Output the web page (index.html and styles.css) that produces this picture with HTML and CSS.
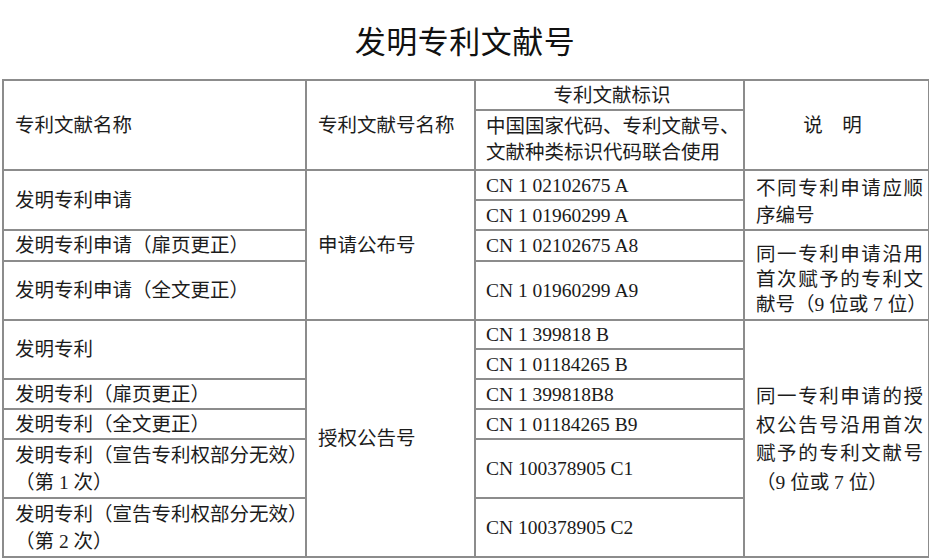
FILE: index.html
```html
<!DOCTYPE html>
<html lang="zh-CN">
<head>
<meta charset="utf-8">
<title>发明专利文献号</title>
<link rel="stylesheet" href="styles.css">
</head>
<body>
<div class="page">
  <h1 class="title">发明专利文献号</h1>
  <table class="grid">
    <colgroup>
      <col class="c1">
      <col class="c2">
      <col class="c3">
      <col class="c4">
    </colgroup>
    <tbody>
      <tr class="h30">
        <td rowspan="2">专利文献名称</td>
        <td rowspan="2">专利文献号名称</td>
        <td class="center">专利文献标识</td>
        <td rowspan="2" class="center hdr-note">说　明</td>
      </tr>
      <tr class="h60">
        <td class="lh26 nowrap">中国国家代码、专利文献号、<br>文献种类标识代码联合使用</td>
      </tr>
      <tr class="h30">
        <td rowspan="2">发明专利申请</td>
        <td rowspan="4">申请公布号</td>
        <td class="num">CN 1 02102675 A</td>
        <td rowspan="2" class="note note-a">
          <span class="jl">不同专利申请应顺</span>
          <span class="ll">序编号</span>
        </td>
      </tr>
      <tr class="h30">
        <td class="num">CN 1 01960299 A</td>
      </tr>
      <tr class="h31">
        <td>发明专利申请（扉页更正）</td>
        <td class="num">CN 1 02102675 A8</td>
        <td rowspan="2" class="note note-b">
          <span class="jl">同一专利申请沿用</span>
          <span class="jl">首次赋予的专利文</span>
          <span class="ll">献号（9 位或 7 位）</span>
        </td>
      </tr>
      <tr class="h59">
        <td>发明专利申请（全文更正）</td>
        <td class="num">CN 1 01960299 A9</td>
      </tr>
      <tr class="h29">
        <td rowspan="2">发明专利</td>
        <td rowspan="6">授权公告号</td>
        <td class="num">CN 1 399818 B</td>
        <td rowspan="6" class="note note-c">
          <span class="jl">同一专利申请的授</span>
          <span class="jl">权公告号沿用首次</span>
          <span class="jl">赋予的专利文献号</span>
          <span class="ll">（9 位或 7 位）</span>
        </td>
      </tr>
      <tr class="h30">
        <td class="num">CN 1 01184265 B</td>
      </tr>
      <tr class="h30">
        <td>发明专利（扉页更正）</td>
        <td class="num">CN 1 399818B8</td>
      </tr>
      <tr class="h30">
        <td>发明专利（全文更正）</td>
        <td class="num">CN 1 01184265 B9</td>
      </tr>
      <tr class="h59">
        <td class="nowrap">发明专利（宣告专利权部分无效）<br>（第 1 次）</td>
        <td class="num">CN 100378905 C1</td>
      </tr>
      <tr class="h59">
        <td class="nowrap">发明专利（宣告专利权部分无效）<br>（第 2 次）</td>
        <td class="num">CN 100378905 C2</td>
      </tr>
    </tbody>
  </table>
</div>
</body>
</html>
```

FILE: styles.css
```css
html, body {
  margin: 0;
  padding: 0;
  background: #ffffff;
}

.page {
  width: 929px;
  padding: 0 1px 0 2px;
  box-sizing: border-box;
  font-family: "Liberation Serif", "Noto Sans CJK SC", serif;
  color: #1c1c1c;
}

.title {
  margin: 0;
  height: 79px;
  display: flex;
  align-items: center;
  justify-content: center;
  font-family: "Noto Sans CJK SC", sans-serif;
  font-weight: 400;
  font-size: 31px;
  letter-spacing: 0.5px;
  color: #111111;
}

.grid {
  width: 926px;
  table-layout: fixed;
  border-collapse: collapse;
  font-size: 19.5px;
  line-height: 27px;
}

.c1 { width: 303px; }
.c2 { width: 169px; }
.c3 { width: 269px; }
.c4 { width: 185px; }

.grid td {
  border: 2px solid #8c8c8c;
  padding: 0 6px 0 11px;
  vertical-align: middle;
  text-align: left;
}

.grid td.center {
  text-align: center;
}

.grid td.hdr-note {
  padding: 0 12px 0 4px;
}

.grid td.num {
  padding-left: 10px;
  color: #1a1a1a;
}

.grid td.lh26 {
  line-height: 26px;
  padding-left: 10px;
}

.grid td.nowrap {
  white-space: nowrap;
}

.grid td.note {
  padding: 0 5px 0 11px;
}

.grid td.note-a {
  line-height: 27px;
  padding-top: 3px;
}

.grid td.note-b {
  line-height: 25px;
  padding-top: 9px;
}

.grid td.note-c {
  line-height: 28.5px;
  padding-top: 3px;
}

.jl {
  display: block;
  white-space: nowrap;
  text-align: justify;
  text-align-last: justify;
}

.ll {
  display: block;
  white-space: nowrap;
}

.h29 { height: 29px; }
.h30 { height: 30px; }
.h31 { height: 31px; }
.h59 { height: 59px; }
.h60 { height: 60px; }
```
